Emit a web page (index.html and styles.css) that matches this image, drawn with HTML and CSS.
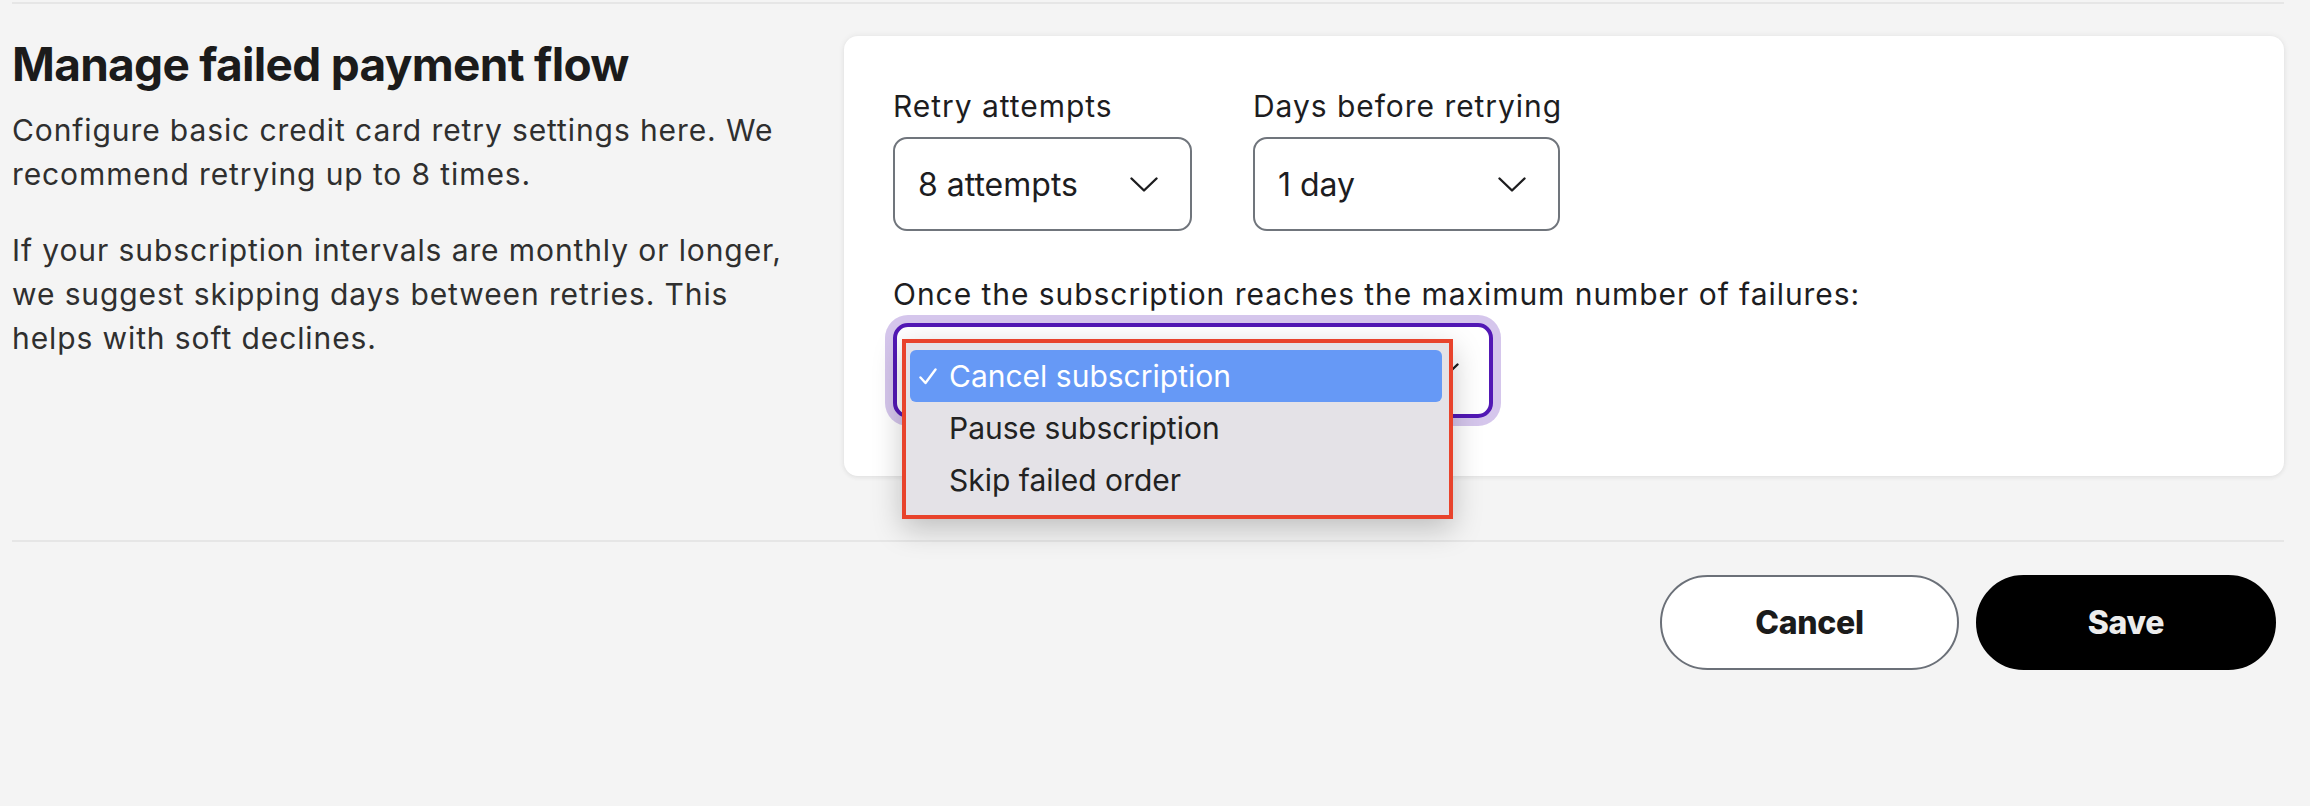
FILE: index.html
```html
<!DOCTYPE html>
<html lang="en">
<head>
<meta charset="utf-8">
<title>Manage failed payment flow</title>
<link rel="stylesheet" href="styles.css">
</head>
<body>
<div class="page">
  <section class="section">
    <div class="intro">
      <h2 class="title">Manage failed payment flow</h2>
      <p class="desc">Configure basic credit card retry settings here. We recommend retrying up to 8 times.</p>
      <p class="desc">If your subscription intervals are monthly or longer, we suggest skipping days between retries. This helps with soft declines.</p>
    </div>
    <div class="card">
      <div class="row">
        <div class="field field-attempts">
          <div class="label">Retry attempts</div>
          <div class="select">
            <span class="value">8 attempts</span>
            <svg class="chev" viewBox="0 0 28 15" width="28" height="15"><polyline points="1.5,1.5 14,13.5 26.5,1.5" fill="none" stroke="#1d1d1f" stroke-width="2.4" stroke-linecap="round" stroke-linejoin="round"/></svg>
          </div>
        </div>
        <div class="field field-days">
          <div class="label">Days before retrying</div>
          <div class="select">
            <span class="value">1 day</span>
            <svg class="chev" viewBox="0 0 28 15" width="28" height="15"><polyline points="1.5,1.5 14,13.5 26.5,1.5" fill="none" stroke="#1d1d1f" stroke-width="2.4" stroke-linecap="round" stroke-linejoin="round"/></svg>
          </div>
        </div>
      </div>
      <div class="field field-max">
        <div class="label">Once the subscription reaches the maximum number of failures:</div>
        <div class="select-wrap">
          <div class="select focused">
            <svg class="chev" viewBox="0 0 28 15" width="28" height="15"><polyline points="1.5,1.5 14,13.5 26.5,1.5" fill="none" stroke="#1d1d1f" stroke-width="2.4" stroke-linecap="round" stroke-linejoin="round"/></svg>
          </div>
          <ul class="menu">
            <li class="item active">
              <svg class="check" viewBox="0 0 18 17" width="18" height="17"><polyline points="1.5,9.5 6.5,15 16.5,1.5" fill="none" stroke="#ffffff" stroke-width="2.4" stroke-linecap="round" stroke-linejoin="round"/></svg>
              <span>Cancel subscription</span>
            </li>
            <li class="item"><span>Pause subscription</span></li>
            <li class="item"><span>Skip failed order</span></li>
          </ul>
        </div>
      </div>
    </div>
  </section>
  <footer class="actions">
    <button class="btn btn-cancel" type="button">Cancel</button>
    <button class="btn btn-save" type="button">Save</button>
  </footer>
</div>
</body>
</html>
```
FILE: styles.css
```css
html, body {
  margin: 0;
  padding: 0;
  background: #f4f4f4;
}

body {
  font-family: "Inter", "Liberation Sans", sans-serif;
  color: #1c1c1c;
}

.page {
  padding: 2px 26px 0 12px;
}

.section {
  display: grid;
  grid-template-columns: 800px 1fr;
  column-gap: 32px;
  align-items: start;
  border-top: 2px solid #e6e6e6;
  padding: 32px 0 64px;
}

.intro {
  padding-top: 1px;
}

.title {
  margin: 0;
  font-family: "Inter", "Liberation Sans", sans-serif;
  font-weight: 700;
  font-size: 46px;
  line-height: 55px;
  letter-spacing: -0.7px;
  color: #1b1b1b;
}

.desc {
  margin: 16px 0 0;
  font-size: 30px;
  line-height: 44px;
  letter-spacing: 0.9px;
  color: #2f2f2f;
}

.desc + .desc {
  margin-top: 32px;
}

.card {
  background: #ffffff;
  border-radius: 14px;
  box-shadow: 0 0 6px rgba(0, 0, 0, 0.07), 0 2px 4px rgba(0, 0, 0, 0.04);
  padding: 50px 48px 58px 49px;
}

.row {
  display: flex;
  column-gap: 61px;
}

.field {
  display: flex;
  flex-direction: column;
}

.label {
  font-size: 30px;
  line-height: 40px;
  letter-spacing: 0.95px;
  color: #1d1d1f;
  margin-bottom: 11px;
}

.select {
  box-sizing: border-box;
  height: 94px;
  display: flex;
  align-items: center;
  justify-content: space-between;
  padding: 0 32px 0 23px;
  background: #ffffff;
  border: 2px solid #70757c;
  border-radius: 14px;
  font-size: 32px;
  color: #1d1d1f;
}

.field-attempts .select {
  width: 299px;
}

.field-days .select {
  width: 307px;
}

.field-max {
  margin-top: 43px;
}

.field-max .label {
  margin-bottom: 9px;
}

.select-wrap {
  position: relative;
  width: 600px;
}

.select.focused {
  width: 600px;
  height: 95px;
  justify-content: flex-end;
  border: 4px solid #5218b5;
  border-radius: 15px;
  box-shadow: 0 0 0 8px #d5c6ec;
  padding: 0 30px 0 21px;
}

.menu {
  position: absolute;
  left: 9px;
  top: 16px;
  box-sizing: border-box;
  width: 551px;
  height: 180px;
  margin: 0;
  padding: 7px 7px 9px 4px;
  list-style: none;
  background: #e4e2e7;
  border: 4px solid #e8432c;
  box-shadow: 0 10px 28px rgba(0, 0, 0, 0.22);
}

.item {
  position: relative;
  height: 52px;
  display: flex;
  align-items: center;
  padding-left: 39px;
  border-radius: 6px;
  font-size: 30px;
  color: #222222;
}

.item.active {
  background: #6699f6;
  color: #ffffff;
}

.check {
  position: absolute;
  left: 9px;
  top: 18px;
}

.actions {
  display: flex;
  justify-content: flex-end;
  column-gap: 17px;
  border-top: 2px solid #e6e6e6;
  padding: 33px 8px 0 0;
}

.btn {
  box-sizing: border-box;
  width: 299px;
  height: 95px;
  border-radius: 48px;
  font-family: "Inter", "Liberation Sans", sans-serif;
  font-weight: 800;
  font-size: 32px;
  letter-spacing: -0.3px;
  cursor: pointer;
}

.btn-cancel {
  background: #ffffff;
  border: 2px solid #6b7078;
  color: #1b1b1b;
}

.btn-save {
  width: 300px;
  background: #000000;
  border: 2px solid #000000;
  color: #ececec;
}
```
